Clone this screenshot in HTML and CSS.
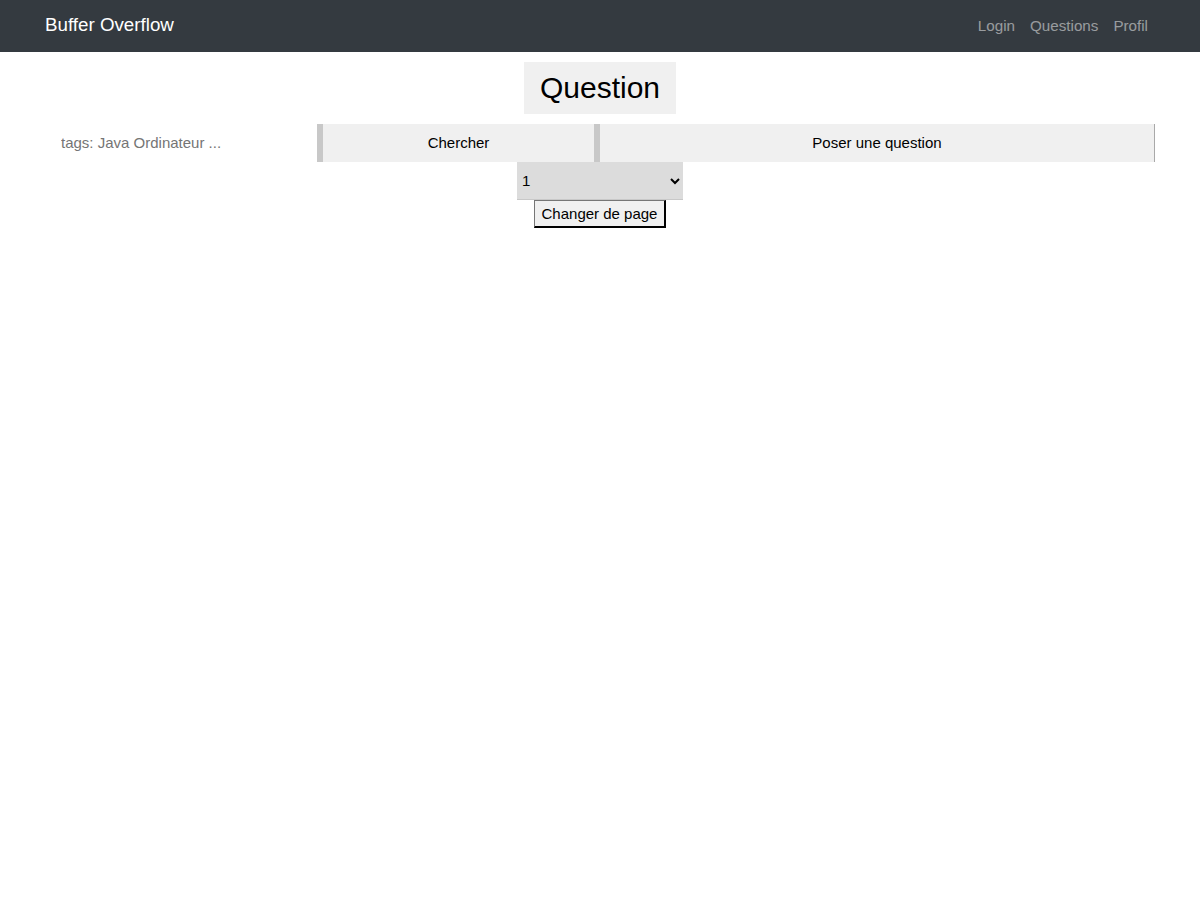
FILE: index.html
```html
<!DOCTYPE html>
<html lang="fr">
<head>
<meta charset="utf-8">
<title>Buffer Overflow</title>
<link rel="stylesheet" href="styles.css">
</head>
<body>
<nav class="navbar">
  <a class="brand" href="#">Buffer Overflow</a>
  <ul class="nav-links">
    <li><a href="#">Login</a></li>
    <li><a href="#">Questions</a></li>
    <li><a href="#">Profil</a></li>
  </ul>
</nav>
<main class="container">
  <div class="title-wrap"><h1 class="title">Question</h1></div>
  <form class="search-row">
    <input class="tags-input" type="text" placeholder="tags: Java Ordinateur ...">
    <button type="button" class="btn btn-search">Chercher</button>
    <button type="button" class="btn btn-ask">Poser une question</button>
  </form>
  <form class="pager">
    <select class="page-select">
      <option>1</option>
    </select>
    <button type="button" class="page-btn">Changer de page</button>
  </form>
</main>
</body>
</html>
```
FILE: styles.css
```css
* { box-sizing: border-box; }
body {
  margin: 0;
  font-family: "Liberation Sans", Arial, sans-serif;
  background: #fff;
  color: #000;
}
.navbar {
  height: 52px;
  background: #343a40;
  display: flex;
  align-items: center;
  justify-content: space-between;
  padding: 0 45px 2px;
}
.brand {
  color: #fff;
  font-size: 18.75px;
  text-decoration: none;
}
.nav-links {
  list-style: none;
  display: flex;
  margin: 0;
  padding: 0;
}
.nav-links a {
  display: block;
  padding: 0 7.5px;
  color: rgba(255,255,255,0.5);
  text-decoration: none;
  font-size: 15.2px;
}
.nav-links li:last-child a { padding-right: 7px; }
.nav-links li:first-child a { padding-left: 8.5px; }
.container {
  width: 1110px;
  margin: 0 auto;
}
.title-wrap {
  display: flex;
  justify-content: center;
  padding-top: 10px;
}
.title {
  margin: 0;
  background: #f0f0f0;
  font-weight: normal;
  font-size: 30px;
  height: 52px;
  line-height: 52px;
  padding: 0 16px;
}
.search-row {
  display: flex;
  margin-top: 10px;
  height: 38px;
}
.tags-input {
  width: 272px;
  border: none;
  background: transparent;
  padding: 0 16px 2px;
  font-family: inherit;
  font-size: 15px;
  color: #495057;
}
.tags-input::placeholder { color: #757575; }
.btn {
  border: none;
  background: #f0f0f0;
  font-family: inherit;
  font-size: 15px;
  color: #000;
  padding: 0 0 2px;
  height: 38px;
}
.btn-search {
  width: 277px;
  border-left: 6px solid #c8c8c8;
}
.btn-ask {
  flex: 1;
  border-left: 6px solid #c8c8c8;
  border-right: 1px solid #a9a9a9;
}
.pager {
  display: flex;
  flex-direction: column;
  align-items: center;
}
.page-select {
  width: 166px;
  height: 38px;
  background: #dcdcdc;
  border: none;
  border-bottom: 1px solid #c8c8c8;
  font-family: inherit;
  font-size: 15px;
  padding: 0 0 0 1px;
  color: #000;
}
.page-btn {
  height: 28px;
  margin-top: 0;
  padding: 0 7px;
  background: #f0f0f0;
  border-style: solid;
  border-color: #767676 #000 #000 #767676;
  border-width: 1px 2px 2px 1px;
  font-family: inherit;
  font-size: 15px;
  color: #000;
}
```
